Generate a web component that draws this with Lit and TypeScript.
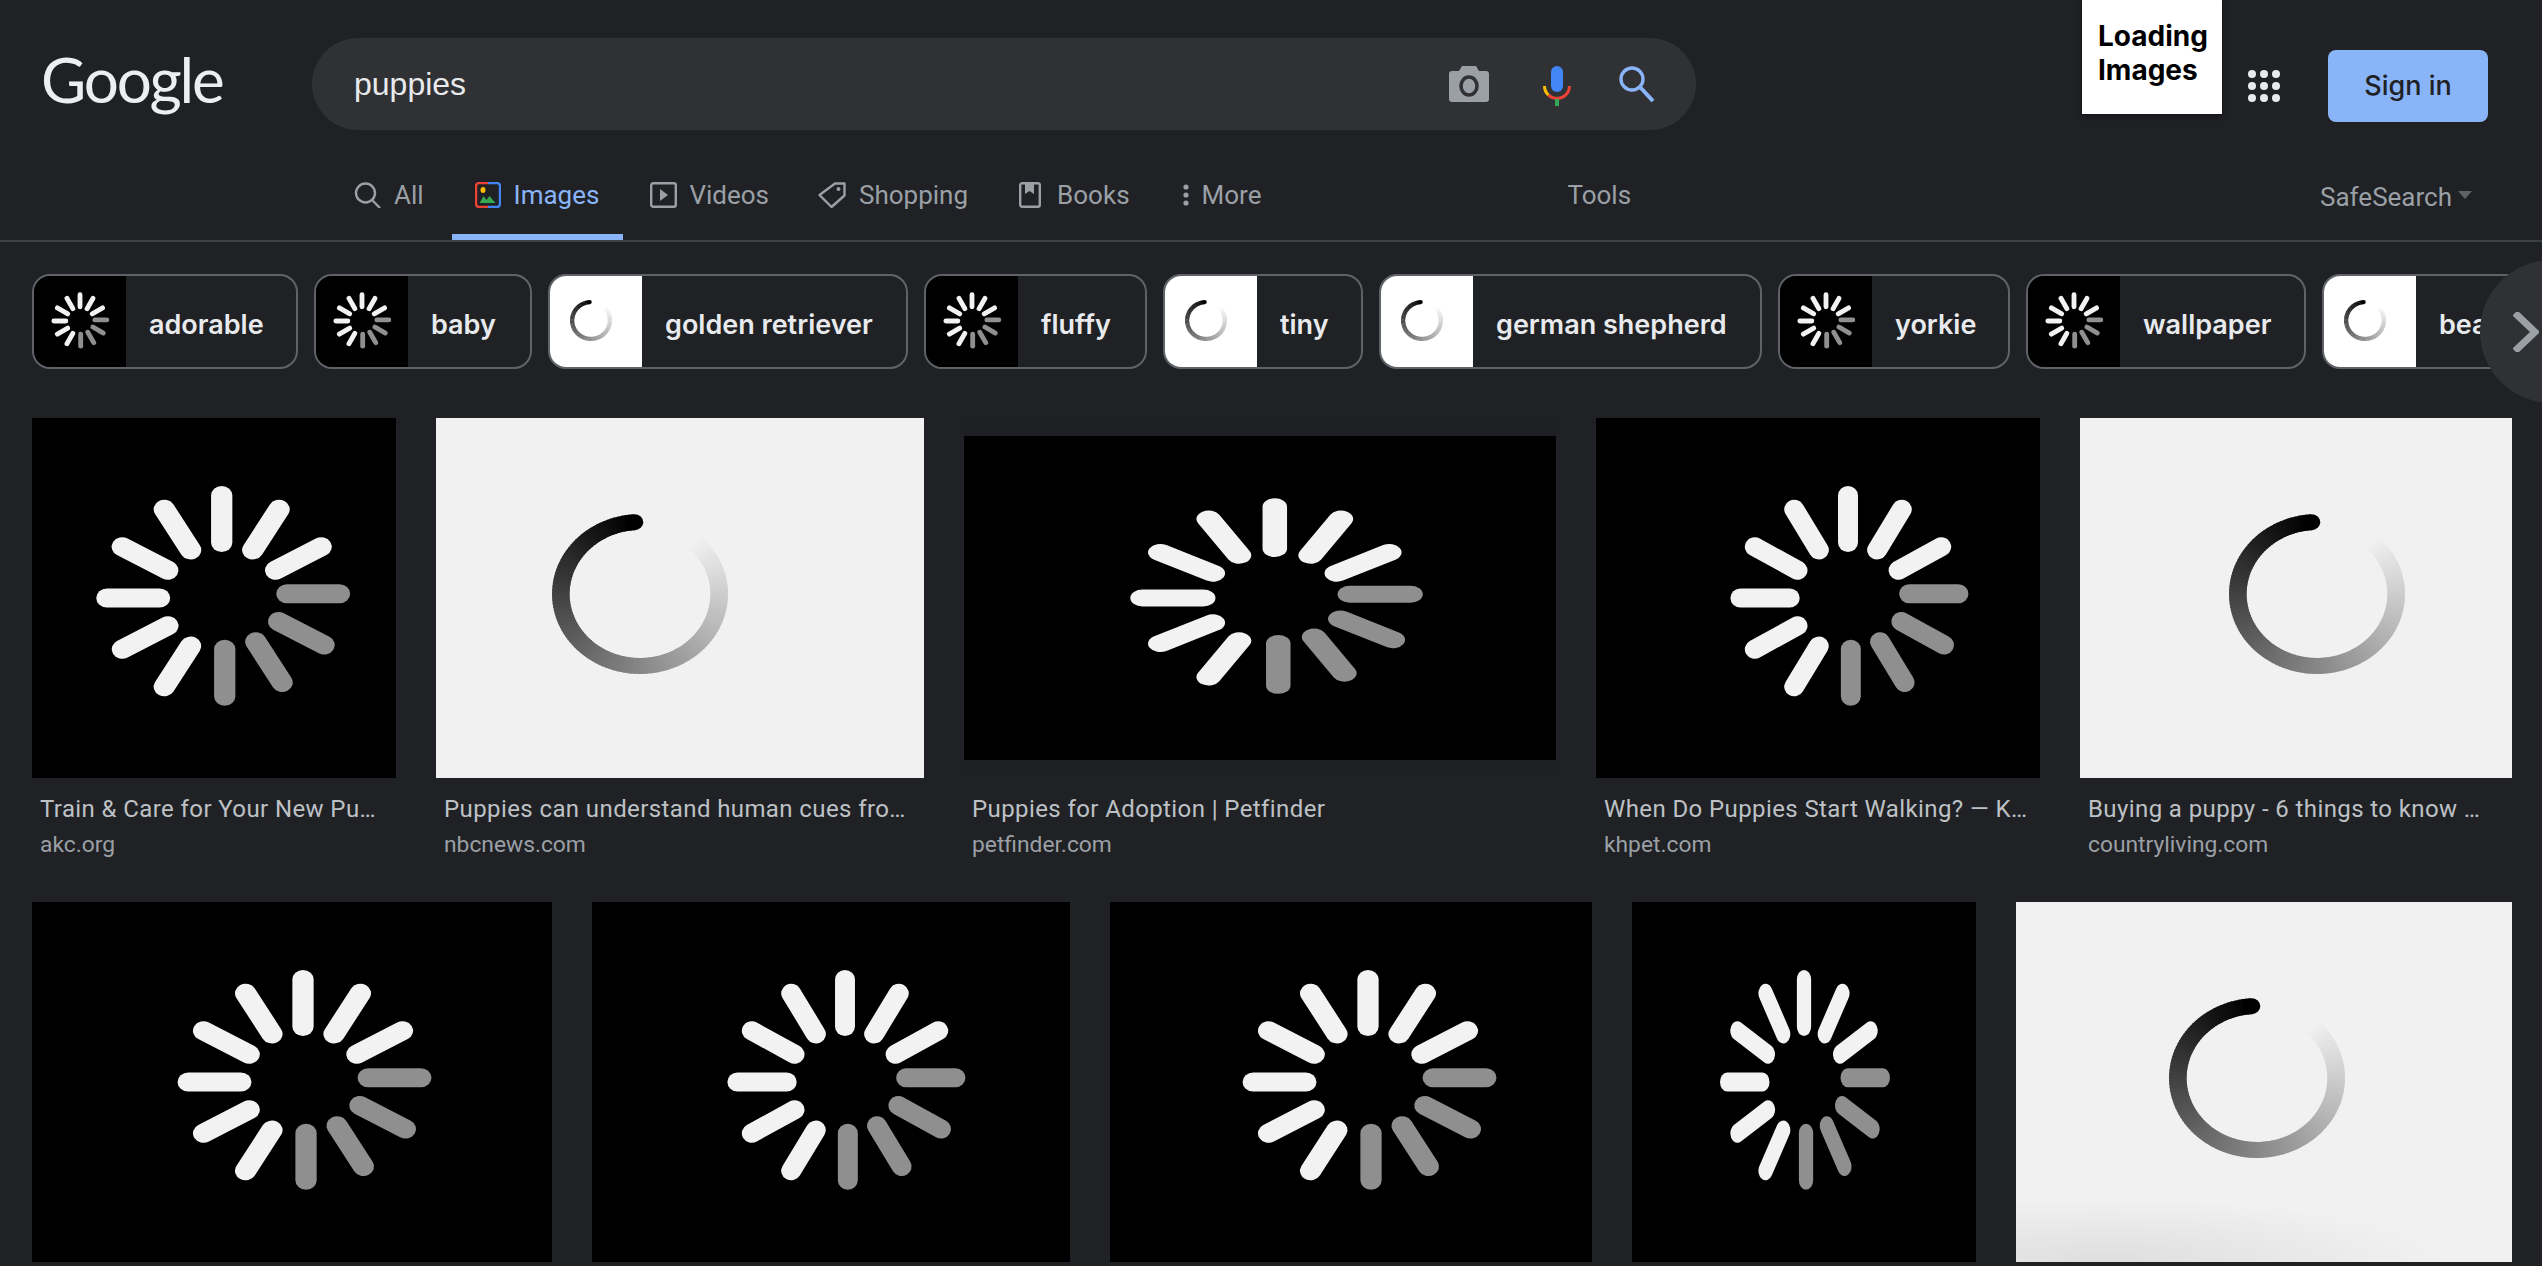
import { LitElement, html, css, svg } from "lit";
import { customElement } from "lit/decorators.js";

type Img = { w: number; kind: "dark" | "ring" | "band"; cx: number; cy: number; sx: number; sy: number; title?: string; site?: string; tint?: boolean };

const SPOKE_ANGLES = [0, 30, 60, 90, 120, 150, 180, 210, 240, 270, 300, 330];

function spokes() {
  return SPOKE_ANGLES.map((a) => {
    const grey = a >= 90 && a <= 180;
    const rad = (a * Math.PI) / 180;
    const ox = grey ? 2.7 : 0;
    const oy = grey ? -4.3 : 0;
    const s = Math.sin(rad);
    const c = Math.cos(rad);
    return svg`<line x1=${ox + 55.5 * s} y1=${oy - 55.5 * c} x2=${ox + 102.5 * s} y2=${oy - 102.5 * c}
      stroke=${grey ? "#8f8f8f" : "#f2f2f2"} stroke-width="19" stroke-linecap="round"></line>`;
  });
}

function ring(bg: number) {
  const n = 124;
  const segs = [];
  for (let i = n - 1; i >= 0; i--) {
    const a0 = ((-4 - (i * 310) / n) * Math.PI) / 180;
    const a1 = ((-4 - ((i + 1.4) * 310) / n) * Math.PI) / 180;
    const v = Math.round((bg * i) / n);
    segs.push(svg`<line x1=${72 * Math.sin(a0)} y1=${-72 * Math.cos(a0)} x2=${72 * Math.sin(a1)} y2=${-72 * Math.cos(a1)}
      stroke=${`rgb(${v},${v},${v})`} stroke-width="16"></line>`);
  }
  segs.push(svg`<circle cx=${72 * Math.sin((-4 * Math.PI) / 180)} cy=${-72 * Math.cos((-4 * Math.PI) / 180)} r="8" fill="#000"></circle>`);
  return segs;
}

function spinner(kind: string, w: number, h: number, cx: number, cy: number, sx: number, sy: number, bg = 241) {
  return html`<svg class="spin" viewBox="0 0 ${w} ${h}" width=${w} height=${h}>
    <g transform="translate(${cx} ${cy}) scale(${sx} ${sy})">${kind === "ring" ? ring(bg) : spokes()}</g>
  </svg>`;
}

const CHIPS = [
  { t: "adorable", w: 266, ring: false },
  { t: "baby", w: 218, ring: false },
  { t: "golden retriever", w: 360, ring: true },
  { t: "fluffy", w: 223, ring: false },
  { t: "tiny", w: 200, ring: true },
  { t: "german shepherd", w: 383, ring: true },
  { t: "yorkie", w: 232, ring: false },
  { t: "wallpaper", w: 280, ring: false },
  { t: "beach", w: 240, ring: true },
];

const ROW1: Img[] = [
  { w: 364, kind: "dark", cx: 189.7, cy: 180, sx: 1.12, sy: 1, title: "Train & Care for Your New Pu…", site: "akc.org" },
  { w: 488, kind: "ring", cx: 204, cy: 176, sx: 1.1, sy: 1, title: "Puppies can understand human cues fro…", site: "nbcnews.com" },
  { w: 592, kind: "band", cx: 310.8, cy: 162, sx: 1.29, sy: 0.89, title: "Puppies for Adoption | Petfinder", site: "petfinder.com" },
  { w: 444, kind: "dark", cx: 252, cy: 180, sx: 1.05, sy: 1, title: "When Do Puppies Start Walking? — K…", site: "khpet.com" },
  { w: 432, kind: "ring", cx: 237, cy: 176, sx: 1.1, sy: 1, title: "Buying a puppy - 6 things to know …", site: "countryliving.com" },
];

const ROW2: Img[] = [
  { w: 520, kind: "dark", cx: 271, cy: 180, sx: 1.12, sy: 1 },
  { w: 478, kind: "dark", cx: 253, cy: 180, sx: 1.05, sy: 1 },
  { w: 482, kind: "dark", cx: 258, cy: 180, sx: 1.12, sy: 1 },
  { w: 344, kind: "dark", cx: 172, cy: 180, sx: 0.75, sy: 1 },
  { w: 496, kind: "ring", cx: 241, cy: 176, sx: 1.1, sy: 1, tint: true },
];

@customElement("app-root")
export class AppRoot extends LitElement {
  static styles = css`
    :host { display: block; width: 2542px; height: 1266px; overflow: hidden; position: relative; background: #202124; font-family: Roboto, "Liberation Sans", sans-serif; }
    svg { display: block; }
    .top { display: flex; align-items: flex-start; height: 130px; box-sizing: border-box; padding: 38px 0 0 41px; }
    .logo { width: 271px; height: 92px; font: 400 62px/82px Lato, sans-serif; letter-spacing: -2.2px; color: #eceef0; flex: none; }
    .search { width: 1384px; height: 92px; flex: none; border-radius: 46px; background: #303134; display: flex; align-items: center; box-sizing: border-box; padding-left: 42px; position: relative; }
    .q { font: 400 32px "Liberation Sans", sans-serif; color: #e8eaed; flex: 1; }
    .s-ic { display: flex; align-items: center; padding-right: 41px; gap: 0; }
    .cam { margin-right: 54px; }
    .mic { margin-right: 48px; margin-top: 4px; }
    .apps { position: absolute; left: 2248px; top: 70px; }
    .signin { position: absolute; left: 2328px; top: 50px; width: 160px; height: 72px; background: #8ab4f8; border-radius: 8px; color: #202124; font: 500 27px/72px Inter, sans-serif; text-align: center; }
    .loading { position: absolute; left: 2082px; top: 0; width: 140px; height: 114px; box-sizing: border-box; padding: 19px 0 0 16px; background: #fff; color: #000; font: 700 28px/34px Inter, sans-serif; box-shadow: 0 2px 6px rgba(0,0,0,.4); }
    .tabs { display: flex; align-items: stretch; height: 112px; box-sizing: border-box; border-bottom: 2px solid #3c4043; padding-left: 331px; color: #9aa0a6; font-size: 26px; }
    .tab { display: flex; align-items: center; gap: 13px; height: 110px; padding: 20px 23px 0; margin-right: 5px; position: relative; box-sizing: border-box; }
    .tab.all { gap: 12px; }
    .tab.vid { gap: 12px; margin-right: 3px; }
    .tab.book { gap: 16px; margin-right: 7px; }
    .tab.on { color: #8ab4f8; padding-right: 24px; margin-right: 4px; }
    .tab.on::after { content: ""; position: absolute; left: 0; right: 0; bottom: 0; height: 6px; background: #8ab4f8; }
    .tools { margin-left: 278px; padding-top: 20px; display: flex; align-items: center; box-sizing: border-box; }
    .safe { margin-left: auto; margin-right: 70px; padding-top: 24px; box-sizing: border-box; display: flex; align-items: center; gap: 6px; color: #9aa0a6; }
    .safe i { width: 0; height: 0; border: 7px solid transparent; border-top: 8px solid #5f6368; border-bottom: 0; margin-top: -4px; }
    .chips { display: flex; gap: 16px; padding: 32px 0 0 32px; height: 95px; overflow: hidden; }
    .chip { flex: none; box-sizing: border-box; height: 95px; border: 2px solid #5f6368; border-radius: 18px; display: flex; overflow: hidden; background: #202124; }
    .thumb { flex: none; width: 92px; height: 91px; background: #000; }
    .thumb.w { background: #fff; }
    .chip span { padding: 5px 0 0 23px; font: 600 27px/88px Inter, sans-serif; color: #e8eaed; white-space: nowrap; }
    .next { position: absolute; left: 2480px; top: 260px; width: 143px; height: 143px; border-radius: 50%; background: #303134; }
    .next svg { position: absolute; left: 33px; top: 52px; }
    .row { display: flex; gap: 40px; padding-left: 32px; }
    .r1 { margin-top: 49px; height: 484px; }
    .item { flex: none; }
    .pic { height: 360px; background: #000; }
    .pic.ring { background: #f1f1f1; position: relative; }
    .pic.band { background: #1f2023; padding: 18px 0; box-sizing: border-box; }
    .pic.band svg { background: #000; }
    .tint { position: absolute; inset: 0; background: radial-gradient(ellipse 70% 18% at 18% 100%, rgba(0,0,0,.08), transparent 100%); }
    .spin { position: relative; }
    .cap { padding: 14px 8px 0; }
    .title { font-size: 24px; line-height: 35px; letter-spacing: 0.4px; color: #bdc1c6; white-space: nowrap; }
    .site { font-size: 22.8px; line-height: 36px; color: #9aa0a6; white-space: nowrap; }
  `;

  render() {
    return html`
      <div class="top">
        <div class="logo">Google</div>
        <div class="search">
          <div class="q">puppies</div>
          <div class="s-ic">
            <svg class="cam" width="40" height="36" viewBox="0 0 40 36"><path d="M13 0h14l3 5h7a3 3 0 0 1 3 3v25a3 3 0 0 1-3 3H3a3 3 0 0 1-3-3V8a3 3 0 0 1 3-3h7z" fill="#9aa0a6"></path><ellipse cx="20" cy="20" rx="8" ry="9" fill="none" stroke="#303134" stroke-width="3.6"></ellipse></svg>
            <svg class="mic" width="28" height="40" viewBox="0 0 28 40">
              <rect x="8" y="0" width="12" height="26" rx="6" fill="#4285f4"></rect>
              <path d="M1.5 20a12.5 12.5 0 0 0 4 9.200" fill="none" stroke="#fbbc04" stroke-width="3"></path>
              <path d="M5.500 29.200a12.500 12.500 0 0 0 17 0a12.500 12.500 0 0 0 4 -9.200" fill="none" stroke="#ea4335" stroke-width="3"></path>
              <rect x="12" y="33" width="4" height="7" fill="#34a853"></rect>
            </svg>
            <svg width="36" height="36" viewBox="0 0 36 36"><circle cx="13" cy="13" r="11" fill="none" stroke="#8ab4f8" stroke-width="3.4"></circle><path d="M21 21l13 14" stroke="#8ab4f8" stroke-width="4"></path></svg>
          </div>
        </div>
      </div>

      <div class="loading">Loading<br />Images</div>
      <svg class="apps" width="32" height="32" viewBox="0 0 32 32" fill="#e8eaed">
        ${[4, 16, 28].flatMap((y) => [4, 16, 28].map((x) => svg`<circle cx=${x} cy=${y} r="4"></circle>`))}
      </svg>
      <div class="signin">Sign in</div>

      <div class="tabs">
        <div class="tab all">
          <svg width="28" height="26" viewBox="0 0 28 26"><circle cx="11.500" cy="11" r="9.500" fill="none" stroke="#9aa0a6" stroke-width="2.400"></circle><path d="M18 18l8 8" stroke="#9aa0a6" stroke-width="2.400"></path></svg>All
        </div>
        <div class="tab on">
          <svg width="26" height="26" viewBox="0 0 26 26">
            <path d="M13 1H4a3 3 0 0 0-3 3v18a3 3 0 0 0 3 3h9" fill="none" stroke="#ea4335" stroke-width="2.400"></path>
            <path d="M13 1h9a3 3 0 0 1 3 3v18a3 3 0 0 1-3 3h-9" fill="none" stroke="#4285f4" stroke-width="2.400"></path>
            <ellipse cx="8" cy="8" rx="2.500" ry="3" fill="#fbbc04"></ellipse>
            <path d="M4.500 21l4-7 3 4 3-4 6 7z" fill="#34a853"></path>
          </svg>Images
        </div>
        <div class="tab vid">
          <svg width="27" height="26" viewBox="0 0 27 26"><rect x="1.200" y="1.200" width="24.600" height="23.600" rx="2" fill="none" stroke="#9aa0a6" stroke-width="2.400"></rect><path d="M10 7l8 6-8 6z" fill="#9aa0a6"></path></svg>Videos
        </div>
        <div class="tab">
          <svg width="28" height="26" viewBox="0 0 28 26"><path d="M17 1.500h9.500v12L13.500 25 1.500 13z" fill="none" stroke="#9aa0a6" stroke-width="2.400" stroke-linejoin="round"></path><circle cx="20.500" cy="7" r="2" fill="#9aa0a6"></circle></svg>Shopping
        </div>
        <div class="tab book">
          <svg width="22" height="26" viewBox="0 0 22 26"><rect x="1.200" y="1.200" width="19.600" height="23.600" rx="2" fill="none" stroke="#9aa0a6" stroke-width="2.400"></rect><path d="M6 1h9v11l-4.500-3-4.500 3z" fill="#9aa0a6"></path></svg>Books
        </div>
        <div class="tab">
          <svg width="6" height="22" viewBox="0 0 6 22" fill="#9aa0a6"><circle cx="3" cy="3" r="2.600"></circle><circle cx="3" cy="11" r="2.600"></circle><circle cx="3" cy="19" r="2.600"></circle></svg>More
        </div>
        <div class="tools">Tools</div>
        <div class="safe">SafeSearch<i></i></div>
      </div>

      <div class="chips">
        ${CHIPS.map(
          (c) => html`<div class="chip" style="width:${c.w}px">
            <div class="thumb ${c.ring ? "w" : ""}">
              ${c.ring ? spinner("ring", 92, 91, 41, 44.5, 0.2625, 0.256, 255) : spinner("dark", 92, 91, 46, 45, 0.255, 0.256)}
            </div>
            <span>${c.t}</span>
          </div>`
        )}
      </div>
      <div class="next"><svg width="26" height="40" viewBox="0 0 26 40"><path d="M2 1l20 19L2 39" fill="none" stroke="#9aa0a6" stroke-width="7"></path></svg></div>

      <div class="row r1">${ROW1.map((i) => this.item(i))}</div>
      <div class="row">${ROW2.map((i) => this.item(i))}</div>
    `;
  }

  item(i: Img) {
    const h = i.kind === "band" ? 324 : 360;
    return html`<div class="item" style="width:${i.w}px">
      <div class="pic ${i.kind}">
        ${i.tint ? html`<div class="tint"></div>` : ""}
        ${spinner(i.kind === "ring" ? "ring" : "dark", i.w, h, i.cx, i.cy, i.sx, i.sy)}
      </div>
      ${i.title ? html`<div class="cap"><div class="title">${i.title}</div><div class="site">${i.site}</div></div>` : ""}
    </div>`;
  }
}
